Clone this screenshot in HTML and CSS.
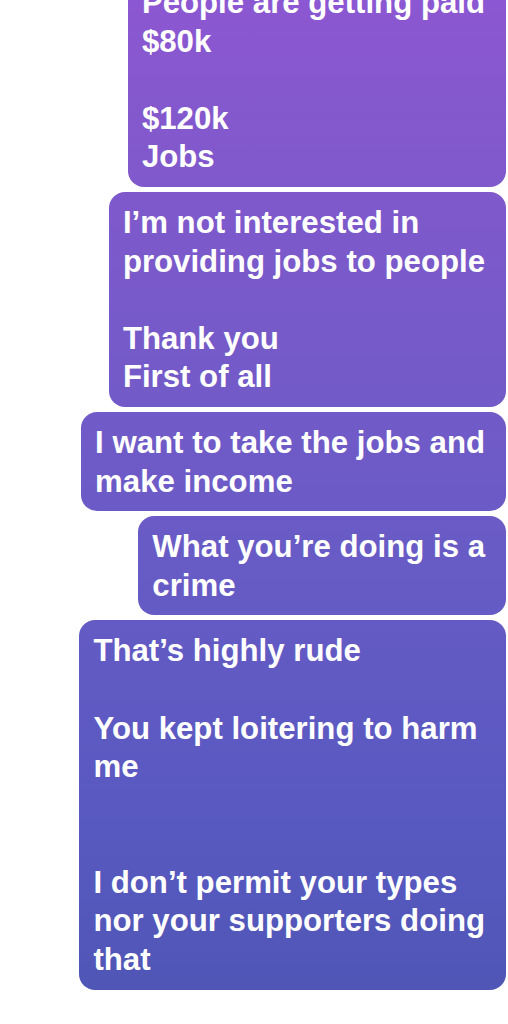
FILE: index.html
```html
<!DOCTYPE html>
<html lang="en">
<head>
<meta charset="utf-8">
<title>Messages</title>
<link rel="stylesheet" href="styles.css">
</head>
<body>
<main class="thread">
  <div class="bubble">People are getting paid<br>$80k<br><br>$120k<br>Jobs</div>
  <div class="bubble">I’m not interested in<br>providing jobs to people<br><br>Thank you<br>First of all</div>
  <div class="bubble">I want to take the jobs and<br>make income</div>
  <div class="bubble">What you’re doing is a<br>crime</div>
  <div class="bubble">That’s highly rude<br><br>You kept loitering to harm<br>me<br><br><br>I don’t permit your types<br>nor your supporters doing<br>that</div>
</main>
</body>
</html>
```

FILE: styles.css
```css
html, body {
  margin: 0;
  padding: 0;
  background: #ffffff;
}
body {
  width: 508px;
  height: 1024px;
  overflow: hidden;
  font-family: "Liberation Sans", Arial, sans-serif;
}
.thread {
  display: flex;
  flex-direction: column;
  align-items: flex-end;
  gap: 5px;
  margin-top: -28px;
  padding-right: 2px;
}
.bubble {
  white-space: nowrap;
  color: #ffffff;
  font-weight: 700;
  font-size: 31.2px;
  line-height: 38.6px;
  padding: 12px 21px 10px 14px;
  border-radius: 16px;
  background: linear-gradient(180deg, #8c57d2 0px, #8658ce 80px, #775ac9 320px, #675bc5 570px, #5959c1 810px, #4f56b5 1000px);
  background-attachment: fixed;
}
```
